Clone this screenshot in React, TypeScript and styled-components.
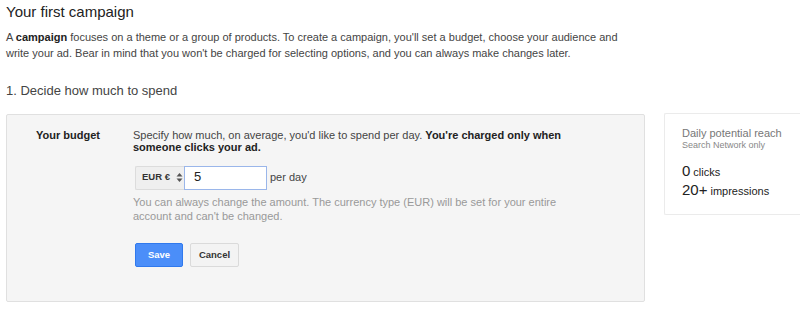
import React from 'react'
import styled, { createGlobalStyle } from 'styled-components'

const GlobalStyle = createGlobalStyle`
  html, body {
    margin: 0;
    padding: 0;
    background: #ffffff;
  }
  body {
    font-family: "Liberation Sans", Arial, sans-serif;
    color: #444;
  }
`

const Page = styled.div`
  width: 800px;
  height: 312px;
  overflow: hidden;
  padding: 3px 0 0 6px;
  box-sizing: border-box;
`

const Title = styled.h1`
  margin: 0;
  font-size: 15px;
  font-weight: normal;
  line-height: 17px;
  color: #222;
`

const Intro = styled.p`
  margin: 10px 0 0 0;
  width: 625px;
  font-size: 11px;
  line-height: 15.5px;
  color: #444;

  b {
    color: #222;
  }
`

const StepTitle = styled.h2`
  margin: 21.5px 0 0 0;
  font-size: 13px;
  font-weight: normal;
  line-height: 16px;
  color: #444;
`

const StepRow = styled.div`
  display: flex;
  align-items: flex-start;
  gap: 19px;
  margin-top: 15.5px;
`

const Panel = styled.div`
  flex: none;
  width: 639px;
  height: 188px;
  box-sizing: border-box;
  background: #f5f5f5;
  border: 1px solid #e0e0e0;
  border-radius: 2px;
  display: flex;
  padding: 13.5px 0 0 29px;
`

const FieldLabel = styled.div`
  width: 97px;
  flex: none;
  font-size: 11px;
  font-weight: bold;
  line-height: 13px;
  color: #222;
`

const FieldBody = styled.div`
  width: 440px;
  font-size: 11px;
  line-height: 12.5px;
  color: #444;

  b {
    color: #222;
  }
`

const AmountRow = styled.div`
  display: flex;
  align-items: center;
  margin-top: 12px;
  height: 24px;
  margin-left: 2px;
`

const CurrencySelect = styled.div`
  box-sizing: border-box;
  width: 49px;
  height: 24px;
  display: flex;
  align-items: center;
  gap: 6px;
  padding-left: 6px;
  background: #efefef;
  border: 1px solid #dcdcdc;
  border-right: none;
  border-radius: 2px 0 0 2px;
  font-size: 9.5px;
  font-weight: bold;
  color: #333;
`

const AmountInput = styled.div`
  box-sizing: border-box;
  width: 83px;
  height: 24px;
  border: 1px solid #9ab6ea;
  background: #fff;
  padding-left: 9px;
  display: flex;
  align-items: center;
  font-size: 13px;
  color: #222;
`

const Unit = styled.span`
  margin-left: 3px;
  font-size: 11px;
  color: #444;
`

const Hint = styled.p`
  margin: 5px 0 0 0;
  font-size: 11px;
  line-height: 14.5px;
  color: #999;
`

const Actions = styled.div`
  display: flex;
  gap: 7px;
  margin-top: 19px;
  margin-left: 2px;
`

const Button = styled.button<{ $primary?: boolean }>`
  box-sizing: border-box;
  height: 24px;
  padding: 0;
  width: ${p => (p.$primary ? '48px' : '49px')};
  border-radius: 2px;
  font-family: "Liberation Sans", Arial, sans-serif;
  font-size: 9.5px;
  font-weight: bold;
  cursor: pointer;
  border: 1px solid ${p => (p.$primary ? '#3079ed' : '#dadada')};
  background: ${p => (p.$primary ? '#4b8ef9' : '#f3f3f3')};
  color: ${p => (p.$primary ? '#fff' : '#333')};
`

const ReachCard = styled.div`
  flex: none;
  width: 160px;
  height: 102px;
  margin-top: -1px;
  box-sizing: border-box;
  border: 1px solid #ebebeb;
  border-right: none;
  border-radius: 2px 0 0 2px;
  padding: 12.5px 0 0 17px;
  background: #fff;
`

const ReachTitle = styled.div`
  font-size: 11px;
  line-height: 13px;
  color: #777;
`

const ReachSub = styled.div`
  font-size: 9px;
  line-height: 11px;
  color: #888;
`

const ReachStats = styled.div`
  margin-top: 11px;
`

const Stat = styled.div`
  line-height: 17px;
  color: #222;
`

const StatValue = styled.span`
  font-size: 15px;
`

const StatUnit = styled.span`
  font-size: 11px;
  margin-left: 3px;
`

function Arrows() {
  return (
    <svg width="7" height="11" viewBox="0 0 7 11" aria-hidden="true">
      <path d="M0.5 4.5 L3.5 1 L6.5 4.5 Z" fill="#555" />
      <path d="M0.5 6.5 L3.5 10 L6.5 6.5 Z" fill="#555" />
    </svg>
  )
}

export default function App() {
  return (
    <>
      <GlobalStyle />
      <Page>
        <Title>Your first campaign</Title>
        <Intro>
          A <b>campaign</b> focuses on a theme or a group of products. To create a campaign, you'll set a budget,
          choose your audience and write your ad. Bear in mind that you won't be charged for selecting options,
          and you can always make changes later.
        </Intro>
        <StepTitle>1. Decide how much to spend</StepTitle>
        <StepRow>
          <Panel>
            <FieldLabel>Your budget</FieldLabel>
            <FieldBody>
              Specify how much, on average, you'd like to spend per day.{' '}
              <b>You're charged only when someone clicks your ad.</b>
              <AmountRow>
                <CurrencySelect>
                  EUR € <Arrows />
                </CurrencySelect>
                <AmountInput>5</AmountInput>
                <Unit>per day</Unit>
              </AmountRow>
              <Hint>
                You can always change the amount. The currency type (EUR) will be set for your entire account and
                can't be changed.
              </Hint>
              <Actions>
                <Button $primary>Save</Button>
                <Button>Cancel</Button>
              </Actions>
            </FieldBody>
          </Panel>
          <ReachCard>
            <ReachTitle>Daily potential reach</ReachTitle>
            <ReachSub>Search Network only</ReachSub>
            <ReachStats>
              <Stat>
                <StatValue>0</StatValue>
                <StatUnit>clicks</StatUnit>
              </Stat>
              <Stat>
                <StatValue>20+</StatValue>
                <StatUnit>impressions</StatUnit>
              </Stat>
            </ReachStats>
          </ReachCard>
        </StepRow>
      </Page>
    </>
  )
}
